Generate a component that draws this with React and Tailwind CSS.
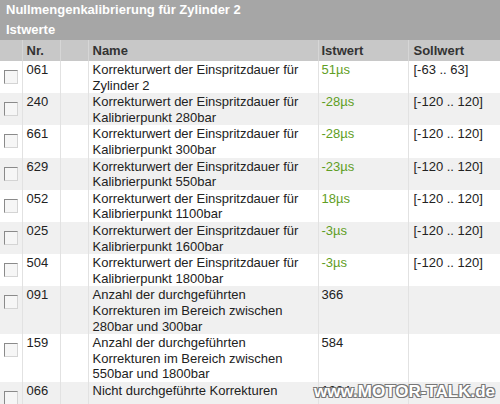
const rows = [
  { nr: '061', name: ['Korrekturwert der Einspritzdauer für', 'Zylinder 2'], ist: '51µs', soll: '[-63 .. 63]', green: true },
  { nr: '240', name: ['Korrekturwert der Einspritzdauer für', 'Kalibrierpunkt 280bar'], ist: '-28µs', soll: '[-120 .. 120]', green: true },
  { nr: '661', name: ['Korrekturwert der Einspritzdauer für', 'Kalibrierpunkt 300bar'], ist: '-28µs', soll: '[-120 .. 120]', green: true },
  { nr: '629', name: ['Korrekturwert der Einspritzdauer für', 'Kalibrierpunkt 550bar'], ist: '-23µs', soll: '[-120 .. 120]', green: true },
  { nr: '052', name: ['Korrekturwert der Einspritzdauer für', 'Kalibrierpunkt 1100bar'], ist: '18µs', soll: '[-120 .. 120]', green: true },
  { nr: '025', name: ['Korrekturwert der Einspritzdauer für', 'Kalibrierpunkt 1600bar'], ist: '-3µs', soll: '[-120 .. 120]', green: true },
  { nr: '504', name: ['Korrekturwert der Einspritzdauer für', 'Kalibrierpunkt 1800bar'], ist: '-3µs', soll: '[-120 .. 120]', green: true },
  { nr: '091', name: ['Anzahl der durchgeführten', 'Korrekturen im Bereich zwischen', '280bar und 300bar'], ist: '366', soll: '' },
  { nr: '159', name: ['Anzahl der durchgeführten', 'Korrekturen im Bereich zwischen', '550bar und 1800bar'], ist: '584', soll: '' },
  { nr: '066', name: ['Nicht durchgeführte Korrekturen', ''], ist: '1384', soll: '' },
]

const Checkbox = () => (
  <span className="block mt-[9px] ml-[4px] w-[14px] h-[14px] bg-[#f6f6f6] border-t border-l border-t-[#8a8a8a] border-l-[#8a8a8a] border-b border-r border-b-[#d4d4d4] border-r-[#d4d4d4]" />
)

export default function App() {
  return (
    <div className="relative w-[500px] h-[404px] overflow-hidden bg-white text-[13px] leading-[16px] text-[#222]" style={{ fontFamily: '"Liberation Sans", Arial, sans-serif' }}>
      <div className="bg-[#a6a6a6] text-white font-bold">
        <div className="h-[20px] px-[6px] flex items-center">Nullmengenkalibrierung für Zylinder 2</div>
        <div className="h-[20px] px-[6px] flex items-center">Istwerte</div>
      </div>
      <table className="w-[500px] border-collapse table-fixed">
        <colgroup>
          <col className="w-[22px]" />
          <col className="w-[38px]" />
          <col className="w-[28px]" />
          <col className="w-[230px]" />
          <col className="w-[90px]" />
          <col className="w-[92px]" />
        </colgroup>
        <thead>
          <tr className="h-[21px] bg-[#c8c8c8] text-[#333] font-bold text-left">
            <th className="border-r border-[#d6d6d6]"></th>
            <th className="px-[4px] border-r border-[#d6d6d6]">Nr.</th>
            <th className="border-r border-[#d6d6d6]"></th>
            <th className="px-[4px] border-r border-[#d6d6d6]">Name</th>
            <th className="px-[3px] border-r border-[#d6d6d6]">Istwert</th>
            <th className="px-[5px]">Sollwert</th>
          </tr>
        </thead>
        <tbody>
          {rows.map((r, i) => (
            <tr key={r.nr} className={i % 2 ? 'bg-[#f0f0f0] align-top' : 'bg-white align-top'}>
              <td className="p-0 border-r border-[#e2e2e2]"><Checkbox /></td>
              <td className="px-[4px] pt-[1px] border-r border-[#e2e2e2]">{r.nr}</td>
              <td className="border-r border-[#e2e2e2]"></td>
              <td className="px-[4px] pt-[1px] border-r border-[#e2e2e2]">
                {r.name.map((l, j) => (
                  <div key={j} className="h-[15.6px] leading-[15.6px] whitespace-nowrap">{l}</div>
                ))}
              </td>
              <td className={'px-[3px] pt-[1px] border-r border-[#e2e2e2] ' + (r.green ? 'text-[#5f9e25]' : '')}>{r.ist}</td>
              <td className="px-[5px] pt-[1px]">{r.soll}</td>
            </tr>
          ))}
        </tbody>
      </table>
      <div
        className="absolute right-[5px] bottom-[4px] text-[17px] font-bold text-white"
        style={{ textShadow: '-1px -1px 0 #777, 1px -1px 0 #777, -1px 1px 0 #777, 1px 1px 0 #777' }}
      >
        www.MOTOR-TALK.de
      </div>
    </div>
  )
}
